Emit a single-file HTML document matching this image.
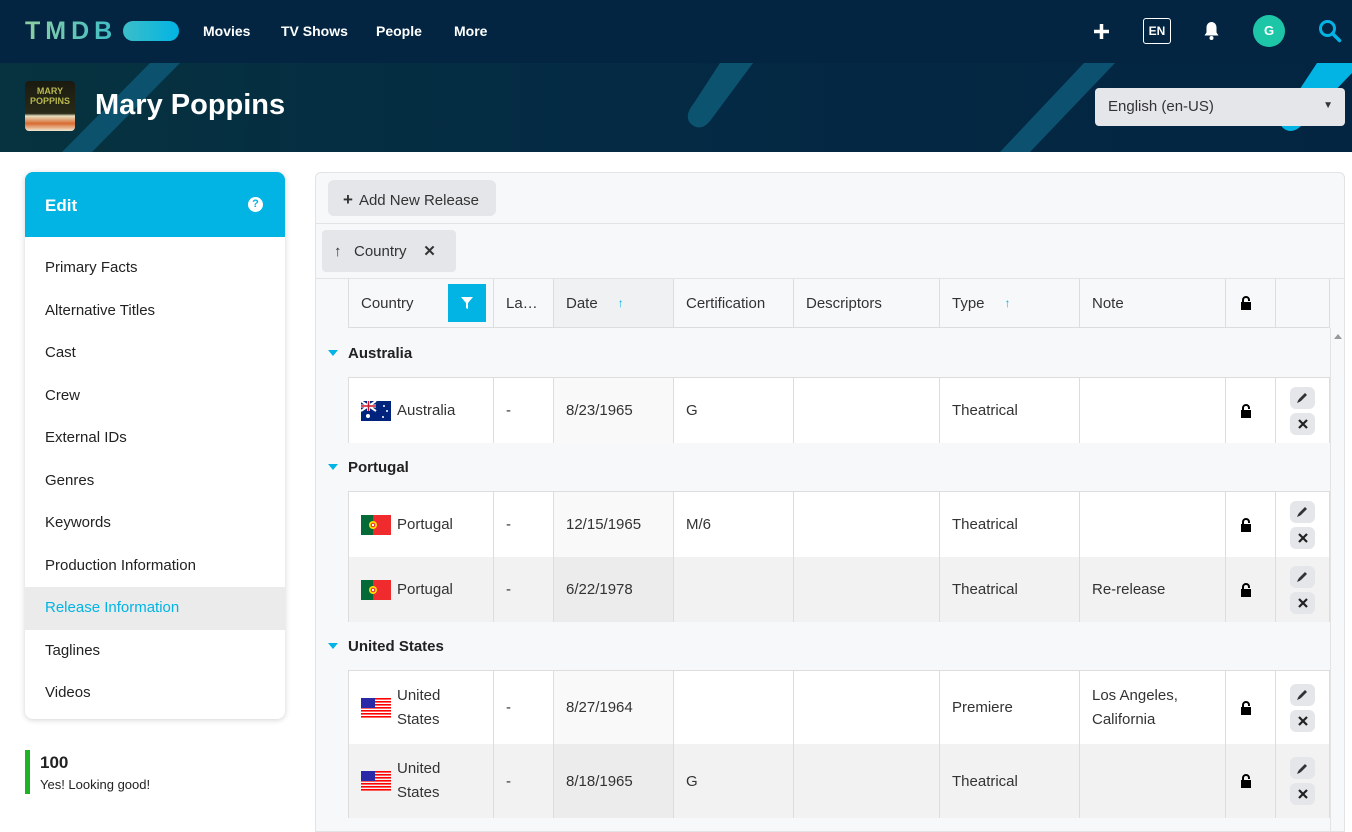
<!DOCTYPE html>
<html><head><meta charset="utf-8"><style>
*{box-sizing:border-box;margin:0;padding:0}
body{width:1352px;height:819px;overflow:hidden;background:#fff;font-family:"Liberation Sans",sans-serif;color:#222;font-size:15px;position:relative}
.hdr{position:absolute;left:0;top:0;width:1352px;height:63px;background:#032541}
.nav{position:absolute;top:23px;color:#fff;font-weight:bold;font-size:14px}
.ban{position:absolute;left:0;top:63px;width:1352px;height:89px;background:linear-gradient(90deg,#06333f 0%,#042a44 45%,#032541 100%);overflow:hidden}
.card{position:absolute;left:25px;top:172px;width:260px;height:547px;border-radius:8px;box-shadow:0 1px 6px rgba(0,0,0,.18);background:#fff;overflow:hidden}
.card .h{height:65px;background:#01b4e4;color:#fff;font-weight:bold;font-size:17px;padding:24px 20px}
.mi{height:42.5px;padding:12px 20px;font-size:15px;color:#222}
.tbl{position:absolute;left:315px;top:172px;width:1030px;height:660px;border:1px solid #e3e3e3;border-radius:6px 6px 0 0;background:#f7f8fa;overflow:hidden}
.row{position:absolute;left:33px;display:grid;grid-template-columns:145px 60px 120px 120px 146px 140px 146px 50px 54px}
.row>div{border-right:1px solid #ddd;padding:0 12px;display:flex;align-items:center;font-size:15px;color:#333}
.row.d{left:32px;background:#fff;border-top:1px solid #ddd;border-left:1px solid #ddd}
.row.g{left:32px;background:#f2f2f2;border-left:1px solid #ddd}
.row.d>div:nth-child(3){background:#f9f9f9}
.row.g>div:nth-child(3){background:#ececec}
.grp{position:absolute;left:12px;font-weight:bold;font-size:15px;color:#222}
.grp:before{content:"";display:inline-block;border:5px solid transparent;border-top:6px solid #01b4e4;border-bottom:0;margin-right:10px;vertical-align:2px}
.btn{width:25px;height:22px;background:#e4e6ea;border-radius:6px;display:flex;align-items:center;justify-content:center;margin:2px 0}
.act{flex-direction:column;justify-content:center!important}
.flag{width:30px;height:20px;margin-right:6px;flex:none}
</style></head><body>
<div class="hdr">
 <div style="position:absolute;left:25px;top:17px;font-size:25px;font-weight:bold;letter-spacing:5px;background:linear-gradient(90deg,#90cea1,#3cbec9);-webkit-background-clip:text;color:transparent">TMDB</div>
 <div style="position:absolute;left:123px;top:21px;width:56px;height:20px;border-radius:10px;background:linear-gradient(90deg,#3cbec9,#01b4e4)"></div>
 <div class="nav" style="left:203px">Movies</div>
 <div class="nav" style="left:281px">TV Shows</div>
 <div class="nav" style="left:376px">People</div>
 <div class="nav" style="left:454px">More</div>
 <svg style="position:absolute;left:1093px;top:23px" width="17" height="17"><path d="M8.5 1v15M1 8.5h15" stroke="#fff" stroke-width="3.5"/></svg>
 <div style="position:absolute;left:1143px;top:18px;width:28px;height:26px;border:1px solid #fff;border-radius:3px;color:#fff;font-size:12px;font-weight:bold;text-align:center;line-height:24px">EN</div>
 <svg style="position:absolute;left:1203px;top:21px" width="17" height="20" viewBox="0 0 17 20"><path d="M8.5 1c-3 0-5 2.5-5 5.5v5L1.5 14.5h14L13.5 11.5v-5C13.5 3.5 11.5 1 8.5 1z" fill="#fff"/><circle cx="8.5" cy="17" r="2" fill="#fff"/></svg>
 <div style="position:absolute;left:1253px;top:15px;width:32px;height:32px;border-radius:50%;background:#1ec6a8;color:#fff;font-size:13px;font-weight:bold;text-align:center;line-height:32px">G</div>
 <svg style="position:absolute;left:1318px;top:19px" width="24" height="24"><circle cx="9.5" cy="9.5" r="7" fill="none" stroke="#01b4e4" stroke-width="3"/><path d="M14.5 14.5l7 7" stroke="#01b4e4" stroke-width="3.5" stroke-linecap="round"/></svg>
</div>
<div class="ban">
 <svg width="1352" height="89" style="position:absolute;left:0;top:0">
  <polygon points="150,0 180,0 92,89 62,89" fill="#0e5a78" opacity=".8"/>
  <path d="M720 0 L753 0 L710 58 Q700 70 690 60 Q684 52 694 40 Z" fill="#0e5a78" opacity=".85"/>
  <polygon points="1084,0 1115,0 1030,89 1000,89" fill="#0e5a78" opacity=".85"/>
  <path d="M1317 0 L1352 0 L1352 10 L1300 64 Q1290 72 1282 64 Q1278 58 1284 50 Z" fill="#01b4e4"/>
 </svg>
 <div style="position:absolute;left:25px;top:18px;width:50px;height:50px;border-radius:4px;background:linear-gradient(180deg,#1a1a10 0%,#2a2a18 65%,#e8e0c0 70%,#d86a30 85%,#f0e8d0 100%);overflow:hidden;font-size:9px;font-weight:bold;color:#b8b850;text-align:center;line-height:10px;padding-top:5px">MARY<br>POPPINS</div>
 <div style="position:absolute;left:95px;top:26px;color:#fff;font-size:29px;font-weight:bold">Mary Poppins</div>
 <div style="position:absolute;left:1095px;top:25px;width:250px;height:38px;background:#e4e6ea;border-radius:4px;padding:10px 13px;font-size:15px;color:#333">English (en-US)<span style="position:absolute;right:12px;top:12px;font-size:10px">&#9660;</span></div>
</div>

<div class="card">
 <div class="h">Edit<span style="position:absolute;right:22px;top:25px;width:15px;height:15px;border-radius:50%;background:#fff;color:#01b4e4;font-size:11px;text-align:center;line-height:15px">?</span></div>
 <div style="height:10px"></div>
 <div class="mi">Primary Facts</div>
 <div class="mi">Alternative Titles</div>
 <div class="mi">Cast</div>
 <div class="mi">Crew</div>
 <div class="mi">External IDs</div>
 <div class="mi">Genres</div>
 <div class="mi">Keywords</div>
 <div class="mi">Production Information</div>
 <div class="mi" style="background:#ebebeb;color:#01b4e4">Release Information</div>
 <div class="mi">Taglines</div>
 <div class="mi">Videos</div>
</div>
<div style="position:absolute;left:25px;top:750px;width:5px;height:44px;background:#1db326"></div>
<div style="position:absolute;left:40px;top:753px;font-weight:bold;font-size:17px">100</div>
<div style="position:absolute;left:40px;top:777px;font-size:13px">Yes! Looking good!</div>

<div class="tbl">
 <div style="position:absolute;left:12px;top:7px;width:168px;height:36px;background:#e4e6ea;border-radius:6px;padding:10px 15px;font-size:15px;color:#333"><b style="font-size:17px;margin-right:6px">+</b>Add New Release</div>
 <div style="position:absolute;left:0;top:50px;width:1030px;border-top:1px solid #e3e3e3"></div>
 <div style="position:absolute;left:6px;top:57px;width:134px;height:42px;background:#e4e6ea;border-radius:4px;padding:12px 12px;font-size:15px;color:#333">&#8593;&nbsp;&nbsp; Country &nbsp;&nbsp; <b>&#10005;</b></div>
 <div style="position:absolute;left:0;top:105px;width:1030px;border-top:1px solid #e3e3e3"></div>
 <div style="position:absolute;left:0;top:106px;width:33px;height:49px;border-right:1px solid #ddd"></div>
 <div class="row" style="top:106px;height:49px;border-bottom:1px solid #ddd">
  <div>Country<span style="margin-left:auto;margin-right:-5px;width:38px;height:38px;background:#01b4e4;display:flex;align-items:center;justify-content:center"><svg width="12" height="12"><path d="M0 0h12L7 6v6L5 11V6z" fill="#fff"/></svg></span></div>
  <div>La…</div><div style="background:#f0f1f3">Date <span style="color:#01b4e4;margin-left:20px;font-size:12px">&#8593;</span></div><div>Certification</div><div>Descriptors</div><div>Type <span style="color:#01b4e4;margin-left:20px;font-size:12px">&#8593;</span></div><div>Note</div><div>LOCK</div><div></div>
 </div>
 <div style="position:absolute;left:1014px;top:155px;width:16px;height:510px;background:#f7f8fa;border-left:1px solid #e3e3e3"><div style="margin:6px 0 0 3px;border:4px solid transparent;border-bottom:5px solid #999;border-top:0;width:0"></div></div>

 <div class="grp" style="top:172px">Australia</div>
 <div class="row d" style="top:204px;height:66px">
  <div><svg class="flag" viewBox="0 0 30 20"><rect width="30" height="20" fill="#00247d"/><rect width="15" height="10" fill="#00247d"/><path d="M0 0l15 10M15 0L0 10" stroke="#fff" stroke-width="2"/><path d="M7.5 0v10M0 5h15" stroke="#fff" stroke-width="3"/><path d="M7.5 0v10M0 5h15" stroke="#cf142b" stroke-width="1.5"/><circle cx="7" cy="15" r="2" fill="#fff"/><circle cx="23" cy="5" r="1" fill="#fff"/><circle cx="26" cy="10" r="1" fill="#fff"/><circle cx="22" cy="16" r="1" fill="#fff"/></svg>Australia</div>
  <div>-</div><div>8/23/1965</div><div>G</div><div></div><div>Theatrical</div><div></div><div>LOCK</div><div class="act">ACT</div>
 </div>

 <div class="grp" style="top:286px">Portugal</div>
 <div class="row d" style="top:318px;height:66px">
  <div>PTF Portugal</div><div>-</div><div>12/15/1965</div><div>M/6</div><div></div><div>Theatrical</div><div></div><div>LOCK</div><div class="act">ACT</div>
 </div>
 <div class="row g" style="top:384px;height:65px">
  <div>PTF Portugal</div><div>-</div><div>6/22/1978</div><div></div><div></div><div>Theatrical</div><div>Re-release</div><div>LOCK</div><div class="act">ACT</div>
 </div>

 <div class="grp" style="top:465px">United States</div>
 <div class="row d" style="top:497px;height:74px">
  <div>USF <span>United<br>States</span></div><div>-</div><div>8/27/1964</div><div></div><div></div><div>Premiere</div><div style="line-height:24px">Los Angeles,<br>California</div><div>LOCK</div><div class="act">ACT</div>
 </div>
 <div class="row g" style="top:571px;height:74px">
  <div>USF <span>United<br>States</span></div><div>-</div><div>8/18/1965</div><div>G</div><div></div><div>Theatrical</div><div></div><div>LOCK</div><div class="act">ACT</div>
 </div>
</div>
<script>
var lock='<svg width="12" height="14" style="margin-left:2px"><path d="M3 7V4a3 3 0 0 1 6 0v1" fill="none" stroke="#000" stroke-width="2"/><rect x="1" y="6" width="10" height="8" fill="#000"/></svg>';
var act='<div class="btn"><svg width="13" height="13"><path d="M2 11l1-3 6-6 2 2-6 6z" fill="#333"/><path d="M1 12l1.5-3.5 2 2z" fill="#333"/></svg></div><div class="btn"><svg width="10" height="10"><path d="M1 1l8 8M9 1l-8 8" stroke="#222" stroke-width="2.2"/></svg></div>';
var pt='<svg class="flag" viewBox="0 0 30 20"><rect width="30" height="20" fill="#ef2b2d"/><rect width="12" height="20" fill="#046a38"/><circle cx="12" cy="10" r="4" fill="#ffe000"/><circle cx="12" cy="10" r="2.3" fill="#ef2b2d"/><circle cx="12" cy="10" r="1.2" fill="#fff"/></svg>';
var us='<svg class="flag" viewBox="0 0 30 20">'+[0,1,2,3,4,5,6].map(function(i){return '<rect y="'+(i*3)+'" width="30" height="1.6" fill="#f00"/>'}).join('')+'<rect width="14" height="10" fill="#2a2aa8"/></svg>';
document.querySelectorAll('.row>div').forEach(function(d){
 if(d.textContent==='LOCK')d.innerHTML=lock;
 else if(d.textContent==='ACT')d.innerHTML=act;
 else if(d.innerHTML.indexOf('PTF ')===0)d.innerHTML=pt+d.innerHTML.slice(4);
 else if(d.innerHTML.indexOf('USF ')===0)d.innerHTML=us+d.innerHTML.slice(4);
});
document.querySelectorAll('.row>div>span').forEach(function(s){s.style.lineHeight='24px'});
</script>
</body></html>
